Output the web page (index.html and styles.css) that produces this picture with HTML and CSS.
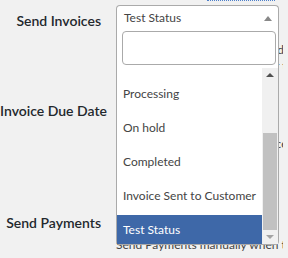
FILE: index.html
```html
<!DOCTYPE html>
<html lang="en">
<head>
    <meta charset="UTF-8">
    <meta name="viewport" content="width=device-width, initial-scale=1.0">
    <title>Invoice Settings</title>
    <link rel="stylesheet" href="styles.css">
</head>
<body>

    <div class="top-link"></div>

    <!-- Send Invoices row, with the status dropdown open -->
    <div class="row row-invoices">
        <div class="row-label">Send Invoices</div>
        <div class="row-field">
            <div class="select">
                <span class="select-current">Test Status</span>
                <span class="select-arrow"></span>

                <div class="dropdown">
                    <div class="dropdown-search">
                        <input type="text" class="search-input">
                    </div>
                    <div class="dropdown-results">
                        <ul class="result-list">
                            <li>Pending payment</li>
                            <li>Processing</li>
                            <li>On hold</li>
                            <li>Completed</li>
                            <li>Invoice Sent to Customer</li>
                            <li class="highlighted">Test Status</li>
                        </ul>
                        <div class="scrollbar">
                            <div class="scroll-up"></div>
                            <div class="scroll-track">
                                <div class="scroll-thumb"></div>
                            </div>
                            <div class="scroll-down"></div>
                        </div>
                    </div>
                </div>
            </div>
            <p class="desc">Choose which order status sends the invoice to</p>
            <p class="desc">the customer automatically, for the orders</p>
        </div>
    </div>

    <!-- Invoice Due Date row -->
    <div class="row row-due">
        <div class="row-label">Invoice Due Date</div>
        <div class="row-field">
            <p class="desc desc-due">Number of days after the invoice date as</p>
        </div>
    </div>

    <!-- Send Payments row -->
    <div class="row row-payments">
        <div class="row-label">Send Payments</div>
        <div class="row-field">
            <p class="desc desc-pay">Send Payments manually when the order is paid</p>
        </div>
    </div>

</body>
</html>
```

FILE: styles.css
```css
body {
    margin: 0;
    height: 258px;
    overflow: hidden;
    background-color: #f1f1f1;
    font-family: Lato, "Open Sans", sans-serif;
    color: #444;
}

.top-link {
    margin-left: 207px;
    width: 68px;
    border-bottom: 1px dotted #4d7fc9;
}

.row {
    display: flex;
}

.row-label {
    width: 101px;
    flex-shrink: 0;
    text-align: right;
    font-size: 14px;
    font-weight: 600;
    line-height: 20px;
    color: #23282d;
    white-space: nowrap;
}

.row-field {
    margin-left: 15px;
    width: 167px;
}

/* Row 1 */
.row-invoices {
    margin-top: 4px;
}

.row-invoices .row-label {
    padding-top: 6px;
}

.desc {
    margin: 0;
    font-size: 12px;
    line-height: 16px;
    white-space: nowrap;
    overflow: hidden;
}

.select + .desc {
    margin-top: 12px;
}

/* Row 2 */
.row-due {
    margin-top: 22px;
}

.row-due .row-label {
    padding-top: 5px;
}

.desc-due {
    margin-top: 40px;
}

/* Row 3 */
.row-payments {
    margin-top: 50px;
}

.row-payments .row-label {
    padding-top: 11px;
}

.desc-pay {
    margin-top: 35px;
}

/* Select box */
.select {
    position: relative;
    width: 163px;
    height: 25px;
    box-sizing: border-box;
    border: 1px solid #aaa;
    border-bottom: none;
    border-radius: 4px 4px 0 0;
    background-color: #fff;
}

.select-current {
    display: block;
    padding-left: 7px;
    font-size: 12px;
    line-height: 24px;
    color: #444;
}

.select-arrow {
    position: absolute;
    right: 6px;
    top: 10px;
    border-style: solid;
    border-width: 0 4px 5px 4px;
    border-color: transparent transparent #888 transparent;
}

/* Open dropdown */
.dropdown {
    position: absolute;
    top: 100%;
    left: -1px;
    width: 163px;
    box-sizing: border-box;
    border: 1px solid #aaa;
    border-top: none;
    border-radius: 0 0 4px 4px;
    background-color: #fff;
    z-index: 10;
}

.dropdown-search {
    padding: 1px 2px 3px 5px;
}

.search-input {
    display: block;
    width: 154px;
    height: 34px;
    box-sizing: border-box;
    margin: 0;
    border: 1px solid #aaa;
    border-radius: 4px;
    background-color: #fff;
    outline: none;
}

.dropdown-results {
    display: flex;
    height: 176px;
    overflow: hidden;
}

.result-list {
    flex: 1;
    margin: -23px 0 0;
    padding: 0;
    list-style: none;
}

.result-list li {
    height: 34px;
    box-sizing: border-box;
    padding: 6px 6px 0;
    font-size: 12px;
    line-height: 18px;
    color: #444;
    white-space: nowrap;
}

.result-list li.highlighted {
    background-color: #3e68a8;
    color: #fff;
}

/* Scrollbar */
.scrollbar {
    width: 17px;
    display: flex;
    flex-direction: column;
    background-color: #f0f0f0;
}

.scroll-up,
.scroll-down {
    height: 17px;
    display: flex;
    align-items: center;
    justify-content: center;
}

.scroll-up::after {
    content: "";
    border-style: solid;
    border-width: 0 4px 4px 4px;
    border-color: transparent transparent #505050 transparent;
}

.scroll-down::after {
    content: "";
    border-style: solid;
    border-width: 4px 4px 0 4px;
    border-color: #a3a3a3 transparent transparent transparent;
}

.scroll-track {
    flex: 1;
    padding-left: 1px;
    padding-right: 1px;
}

.scroll-thumb {
    margin-top: 50px;
    height: 97px;
    background-color: #c1c1c1;
}
```
